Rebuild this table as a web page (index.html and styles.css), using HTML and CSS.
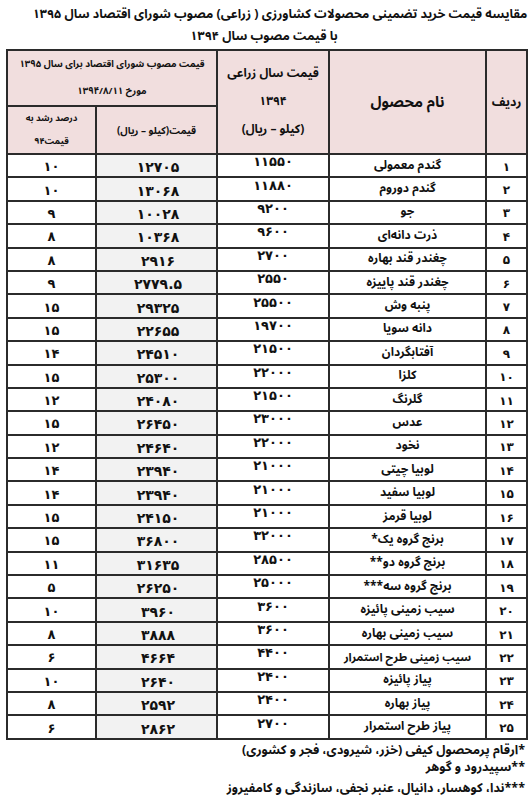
FILE: index.html
```html
<!DOCTYPE html>
<html lang="fa" dir="rtl">
<head>
<meta charset="utf-8">
<title>مقایسه قیمت خرید تضمینی</title>
<link rel="stylesheet" href="styles.css">
</head>
<body>
<div class="page">
  <h1 class="title">
    <span class="title-line title-line-1">مقایسه قیمت خرید تضمینی محصولات کشاورزی ( زراعی) مصوب شورای اقتصاد سال ۱۳۹۵</span>
    <span class="title-line title-line-2">با قیمت مصوب سال ۱۳۹۴</span>
  </h1>
  <table class="prices">
    <colgroup>
      <col class="c-radif">
      <col class="c-name">
      <col class="c-p94">
      <col class="c-p95">
      <col class="c-pct">
    </colgroup>
    <thead>
      <tr class="h1">
        <th rowspan="2" class="th-radif">ردیف</th>
        <th rowspan="2" class="th-name">نام محصول</th>
        <th rowspan="2" class="th-p94"><span class="l">قیمت سال زراعی</span><span class="l">۱۳۹۴</span><span class="l">(کیلو – ریال)</span></th>
        <th colspan="2" class="th-p95"><span class="l">قیمت مصوب شورای اقتصاد برای سال ۱۳۹۵</span><span class="l">مورخ ۱۳۹۴/۸/۱۱</span></th>
      </tr>
      <tr class="h2">
        <th class="th-sub">قیمت(کیلو – ریال)</th>
        <th class="th-pct"><span class="l">درصد رشد به</span><span class="l">قیمت۹۴</span></th>
      </tr>
    </thead>
    <tbody>
      <tr><td class="radif">۱</td><td class="name">گندم معمولی</td><td class="p94">۱۱۵۵۰</td><td class="p95">۱۲۷۰۵</td><td class="pct">۱۰</td></tr>
      <tr><td class="radif">۲</td><td class="name">گندم دوروم</td><td class="p94">۱۱۸۸۰</td><td class="p95">۱۳۰۶۸</td><td class="pct">۱۰</td></tr>
      <tr><td class="radif">۳</td><td class="name">جو</td><td class="p94">۹۲۰۰</td><td class="p95">۱۰۰۲۸</td><td class="pct">۹</td></tr>
      <tr><td class="radif">۴</td><td class="name">ذرت دانه‌ای</td><td class="p94">۹۶۰۰</td><td class="p95">۱۰۳۶۸</td><td class="pct">۸</td></tr>
      <tr><td class="radif">۵</td><td class="name">چغندر قند بهاره</td><td class="p94">۲۷۰۰</td><td class="p95">۲۹۱۶</td><td class="pct">۸</td></tr>
      <tr><td class="radif">۶</td><td class="name">چغندر قند پاییزه</td><td class="p94">۲۵۵۰</td><td class="p95">۲۷۷۹.۵</td><td class="pct">۹</td></tr>
      <tr><td class="radif">۷</td><td class="name">پنبه وش</td><td class="p94">۲۵۵۰۰</td><td class="p95">۲۹۳۲۵</td><td class="pct">۱۵</td></tr>
      <tr><td class="radif">۸</td><td class="name">دانه سویا</td><td class="p94">۱۹۷۰۰</td><td class="p95">۲۲۶۵۵</td><td class="pct">۱۵</td></tr>
      <tr><td class="radif">۹</td><td class="name">آفتابگردان</td><td class="p94">۲۱۵۰۰</td><td class="p95">۲۴۵۱۰</td><td class="pct">۱۴</td></tr>
      <tr><td class="radif">۱۰</td><td class="name">کلزا</td><td class="p94">۲۲۰۰۰</td><td class="p95">۲۵۳۰۰</td><td class="pct">۱۵</td></tr>
      <tr><td class="radif">۱۱</td><td class="name">گلرنگ</td><td class="p94">۲۱۵۰۰</td><td class="p95">۲۴۰۸۰</td><td class="pct">۱۲</td></tr>
      <tr><td class="radif">۱۲</td><td class="name">عدس</td><td class="p94">۲۳۰۰۰</td><td class="p95">۲۶۴۵۰</td><td class="pct">۱۵</td></tr>
      <tr><td class="radif">۱۳</td><td class="name">نخود</td><td class="p94">۲۲۰۰۰</td><td class="p95">۲۴۶۴۰</td><td class="pct">۱۲</td></tr>
      <tr><td class="radif">۱۴</td><td class="name">لوبیا چیتی</td><td class="p94">۲۱۰۰۰</td><td class="p95">۲۳۹۴۰</td><td class="pct">۱۴</td></tr>
      <tr><td class="radif">۱۵</td><td class="name">لوبیا سفید</td><td class="p94">۲۱۰۰۰</td><td class="p95">۲۳۹۴۰</td><td class="pct">۱۴</td></tr>
      <tr><td class="radif">۱۶</td><td class="name">لوبیا قرمز</td><td class="p94">۲۱۰۰۰</td><td class="p95">۲۴۱۵۰</td><td class="pct">۱۵</td></tr>
      <tr><td class="radif">۱۷</td><td class="name">برنج گروه یک*</td><td class="p94">۳۲۰۰۰</td><td class="p95">۳۶۸۰۰</td><td class="pct">۱۵</td></tr>
      <tr><td class="radif">۱۸</td><td class="name">برنج گروه دو**</td><td class="p94">۲۸۵۰۰</td><td class="p95">۳۱۶۳۵</td><td class="pct">۱۱</td></tr>
      <tr><td class="radif">۱۹</td><td class="name">برنج گروه سه***</td><td class="p94">۲۵۰۰۰</td><td class="p95">۲۶۲۵۰</td><td class="pct">۵</td></tr>
      <tr><td class="radif">۲۰</td><td class="name">سیب زمینی پائیزه</td><td class="p94">۳۶۰۰</td><td class="p95">۳۹۶۰</td><td class="pct">۱۰</td></tr>
      <tr><td class="radif">۲۱</td><td class="name">سیب زمینی بهاره</td><td class="p94">۳۶۰۰</td><td class="p95">۳۸۸۸</td><td class="pct">۸</td></tr>
      <tr><td class="radif">۲۲</td><td class="name name-sm">سیب زمینی طرح استمرار</td><td class="p94">۴۴۰۰</td><td class="p95">۴۶۶۴</td><td class="pct">۶</td></tr>
      <tr><td class="radif">۲۳</td><td class="name">پیاز پائیزه</td><td class="p94">۲۴۰۰</td><td class="p95">۲۶۴۰</td><td class="pct">۱۰</td></tr>
      <tr><td class="radif">۲۴</td><td class="name">پیاز بهاره</td><td class="p94">۲۴۰۰</td><td class="p95">۲۵۹۲</td><td class="pct">۸</td></tr>
      <tr><td class="radif">۲۵</td><td class="name">پیاز طرح استمرار</td><td class="p94">۲۷۰۰</td><td class="p95">۲۸۶۲</td><td class="pct">۶</td></tr>
    </tbody>
  </table>
  <div class="notes">
    <p class="note">*ارقام پرمحصول کیفی (خزر، شیرودی، فجر و کشوری)</p>
    <p class="note">**سپیدرود و گوهر</p>
    <p class="note note-last">***ندا، کوهسار، دانیال، عنبر نجفی، سازندگی و کامفیروز</p>
  </div>
</div>
</body>
</html>
```

FILE: styles.css
```css
html, body {
  margin: 0;
  padding: 0;
  background: #ffffff;
}

body {
  font-family: "Noto Sans Arabic", "Noto Naskh Arabic", "DejaVu Sans", sans-serif;
  font-weight: bold;
  color: #111111;
  width: 529px;
  height: 799px;
  overflow: hidden;
}

.page {
  padding: 3px 1px 0 8px;
}

.title {
  margin: 0;
  font-size: 12.5px;
  line-height: 22px;
  font-weight: bold;
  text-align: center;
  display: flex;
  flex-direction: column;
  align-items: center;
  height: 46px;
}

.title-line {
  display: block;
  white-space: nowrap;
}

.title-line-1 {
  padding-left: 24px;
}

.title-line-2 {
  padding-right: 8px;
}

.prices {
  width: 520px;
  border-collapse: collapse;
  table-layout: fixed;
  font-size: 13px;
}

.c-radif { width: 41px; }
.c-name { width: 157px; }
.c-p94 { width: 112px; }
.c-p95 { width: 121px; }
.c-pct { width: 89px; }

.prices th,
.prices td {
  border: 2px solid #2b2b2b;
  text-align: center;
  padding: 0;
  white-space: nowrap;
}

.prices th {
  background: #f1dede;
  font-weight: bold;
}

.l {
  display: block;
}

.h1 { height: 52px; }
.h2 { height: 44px; }

.th-radif { font-size: 12.5px; }
.th-name { font-size: 15px; }
.th-p94 { font-size: 12px; line-height: 28px; }
.th-p95 { font-size: 9.5px; line-height: 27px; }
.th-sub { font-size: 10px; }
.th-pct { font-size: 9px; line-height: 23px; }

.prices tbody tr {
  height: 23.4px;
}

.prices td {
  line-height: 16px;
  padding: 0;
  vertical-align: middle;
}

.prices td.name {
  font-size: 12px;
}

.prices td.name-sm {
  font-size: 11.5px;
}

.prices td.radif,
.prices td.p94,
.prices td.p95,
.prices td.pct {
  font-family: "DejaVu Sans", sans-serif;
}

.prices td.radif {
  font-size: 12px;
  padding-top: 2px;
}

.prices td.p94 {
  font-size: 13px;
  line-height: 14px;
  padding-bottom: 7px;
}

.prices td.p95 {
  background: #f2f2f2;
  font-size: 14px;
  letter-spacing: 3.5px;
  padding-top: 3px;
  padding-left: 3px;
}

.prices td.pct {
  font-size: 13px;
  padding-top: 3px;
}

.notes {
  padding-top: 2px;
  padding-right: 3px;
}

.note {
  margin: 0;
  font-size: 12.5px;
  line-height: 17px;
}

.note-last {
  margin-top: 4px;
}
```
